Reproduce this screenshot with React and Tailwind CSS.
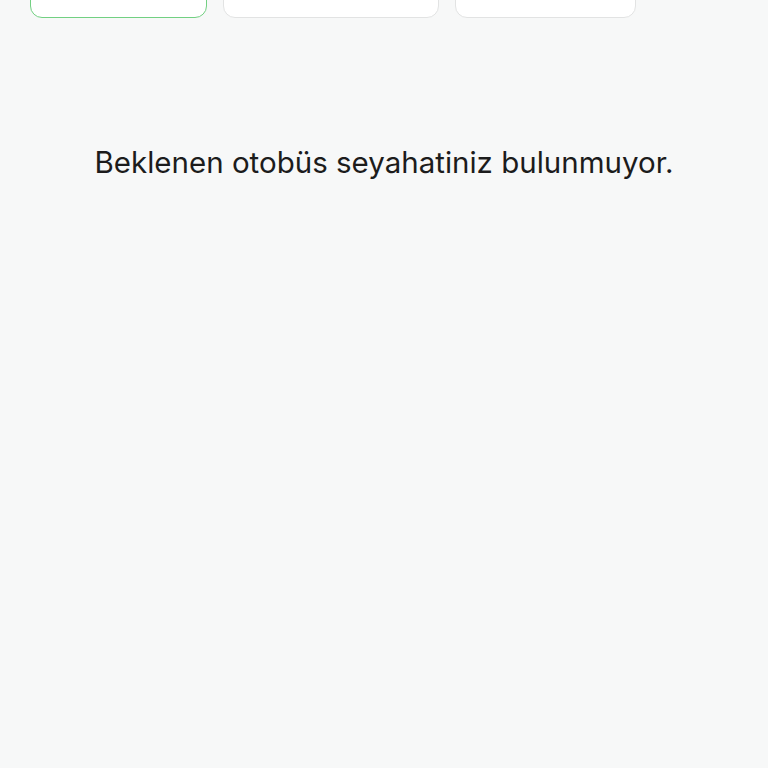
export default function App() {
  return (
    <div className="h-screen w-full overflow-hidden bg-[#f7f8f8]" style={{ fontFamily: "Inter, 'Noto Sans', sans-serif" }}>
      {/* Sekmeler */}
      <div className="flex gap-4 pl-[30px] -mt-[30px]">
        <div className="h-[48px] w-[177px] rounded-xl border-[1.5px] border-[#72d082] bg-white" />
        <div className="h-[48px] w-[216px] rounded-xl border border-[#e2e3e3] bg-white" />
        <div className="h-[48px] w-[181px] rounded-xl border border-[#e2e3e3] bg-white" />
      </div>

      {/* Boş durum mesajı */}
      <p className="mt-[124px] text-center text-[29.5px] leading-[40px] text-[#1c1c1c]">
        Beklenen otobüs seyahatiniz bulunmuyor.
      </p>
    </div>
  );
}
